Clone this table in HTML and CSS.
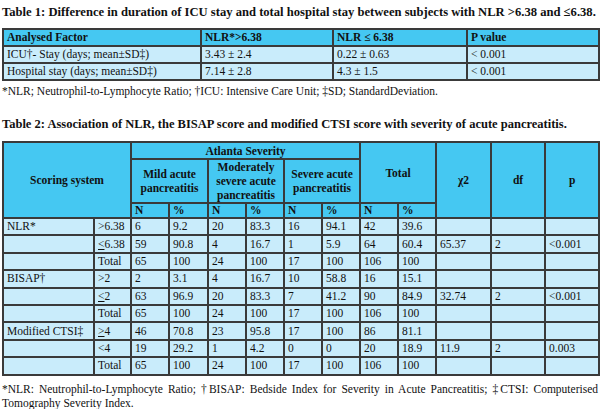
FILE: index.html
```html
<!DOCTYPE html>
<html>
<head>
<meta charset="utf-8">
<link rel="stylesheet" href="styles.css">
</head>
<body>
<div class="page">
  <h2 class="title t1">Table 1: Difference in duration of ICU stay and total hospital stay between subjects with NLR &gt;6.38 and ≤6.38.</h2>
  <table class="tbl tbl1">
    <colgroup><col class="c1a"><col class="c1b"><col class="c1c"><col class="c1d"></colgroup>
    <tr class="hd"><th>Analysed Factor</th><th>NLR*&gt;6.38</th><th>NLR ≤ 6.38</th><th>P value</th></tr>
    <tr><td>ICU†- Stay (days; mean±SD‡)</td><td>3.43 ± 2.4</td><td>0.22 ± 0.63</td><td>&lt; 0.001</td></tr>
    <tr><td>Hospital stay (days; mean±SD‡)</td><td>7.14 ± 2.8</td><td>4.3 ± 1.5</td><td>&lt; 0.001</td></tr>
  </table>
  <p class="note n1">*NLR; Neutrophil-to-Lymphocyte Ratio; †ICU: Intensive Care Unit; ‡SD; StandardDeviation.</p>

  <h2 class="title t2">Table 2: Association of NLR, the BISAP score and modified CTSI score with severity of acute pancreatitis.</h2>
  <table class="tbl tbl2">
    <colgroup>
      <col class="w91"><col class="w37"><col class="w38"><col class="w39"><col class="w38"><col class="w38"><col class="w38"><col class="w38"><col class="w38"><col class="w38"><col class="w55"><col class="w54"><col class="w54">
    </colgroup>
    <tr class="hd h-a">
      <th colspan="2" rowspan="3" class="ctr">Scoring system</th>
      <th colspan="6" class="ctr">Atlanta Severity</th>
      <th colspan="2" rowspan="2" class="ctr">Total</th>
      <th rowspan="3" class="ctr">χ2</th>
      <th rowspan="3" class="ctr">df</th>
      <th rowspan="3" class="ctr">p</th>
    </tr>
    <tr class="hd h-b">
      <th colspan="2" class="ctr">Mild acute pancreatitis</th>
      <th colspan="2" class="ctr">Moderately severe acute pancreatitis</th>
      <th colspan="2" class="ctr">Severe acute pancreatitis</th>
    </tr>
    <tr class="hd h-c">
      <th>N</th><th>%</th><th>N</th><th>%</th><th>N</th><th>%</th><th>N</th><th>%</th>
    </tr>
    <tr><td>NLR*</td><td>&gt;6.38</td><td>6</td><td>9.2</td><td>20</td><td>83.3</td><td>16</td><td>94.1</td><td>42</td><td>39.6</td><td></td><td></td><td></td></tr>
    <tr><td></td><td><u>&lt;</u>6.38</td><td>59</td><td>90.8</td><td>4</td><td>16.7</td><td>1</td><td>5.9</td><td>64</td><td>60.4</td><td>65.37</td><td>2</td><td>&lt;0.001</td></tr>
    <tr><td></td><td>Total</td><td>65</td><td>100</td><td>24</td><td>100</td><td>17</td><td>100</td><td>106</td><td>100</td><td></td><td></td><td></td></tr>
    <tr><td>BISAP†</td><td>&gt;2</td><td>2</td><td>3.1</td><td>4</td><td>16.7</td><td>10</td><td>58.8</td><td>16</td><td>15.1</td><td></td><td></td><td></td></tr>
    <tr><td></td><td><u>&lt;</u>2</td><td>63</td><td>96.9</td><td>20</td><td>83.3</td><td>7</td><td>41.2</td><td>90</td><td>84.9</td><td>32.74</td><td>2</td><td>&lt;0.001</td></tr>
    <tr><td></td><td>Total</td><td>65</td><td>100</td><td>24</td><td>100</td><td>17</td><td>100</td><td>106</td><td>100</td><td></td><td></td><td></td></tr>
    <tr><td>Modified CTSI‡</td><td><u>&gt;</u>4</td><td>46</td><td>70.8</td><td>23</td><td>95.8</td><td>17</td><td>100</td><td>86</td><td>81.1</td><td></td><td></td><td></td></tr>
    <tr><td></td><td>&lt;4</td><td>19</td><td>29.2</td><td>1</td><td>4.2</td><td>0</td><td>0</td><td>20</td><td>18.9</td><td>11.9</td><td>2</td><td>0.003</td></tr>
    <tr><td></td><td>Total</td><td>65</td><td>100</td><td>24</td><td>100</td><td>17</td><td>100</td><td>106</td><td>100</td><td></td><td></td><td></td></tr>
  </table>
  <p class="note n2">*NLR: Neutrophil-to-Lymphocyte Ratio; †BISAP: Bedside Index for Severity in Acute Pancreatitis; ‡CTSI: Computerised Tomography Severity Index.</p>
</div>
</body>
</html>
```

FILE: styles.css
```css
html, body {
  margin: 0;
  padding: 0;
  background: #ffffff;
}
.page {
  width: 596px;
  padding: 0 2px;
  font-family: "Liberation Serif", "Times New Roman", serif;
  color: #111;
  font-size: 11.5px;
}
.title {
  margin: 0;
  font-weight: bold;
  line-height: 16px;
  white-space: nowrap;
}
.t1 { font-size: 12.6px; padding-top: 4px; margin-bottom: 8px; }
.t2 { font-size: 12.5px; margin-top: 18px; margin-bottom: 9px; }
.tbl {
  width: 596px;
  border-collapse: collapse;
  table-layout: fixed;
  border: 2px solid #3a3a3a;
}
.tbl td, .tbl th {
  border: 2px solid #3a3a3a;
  padding: 0 3px;
  height: 15px;
  line-height: 15px;
  text-align: left;
  vertical-align: middle;
  background: #c9ecfb;
  font-weight: normal;
  white-space: nowrap;
  overflow: hidden;
}
.tbl2 td { height: 15.4px; }
.tbl th {
  background: #45c8f2;
  font-weight: bold;
}
.tbl th.ctr {
  text-align: center;
  white-space: normal;
  line-height: 14px;
}
.c1a { width: 198px; }
.c1b { width: 132px; }
.c1c { width: 134px; }
.c1d { width: 132px; }
.w91 { width: 91px; }
.w37 { width: 37px; }
.w38 { width: 38px; }
.w39 { width: 39px; }
.w55 { width: 55px; }
.w54 { width: 54px; }
.h-b th { height: 42px; }
.h-c th { height: 13px; line-height: 13px; }
.note {
  margin: 0;
  line-height: 14px;
}
.n1 { margin-top: 3px; }
.n2 {
  margin-top: 6px;
  text-align: justify;
}
u { text-decoration: underline; text-underline-offset: 1px; }
```
